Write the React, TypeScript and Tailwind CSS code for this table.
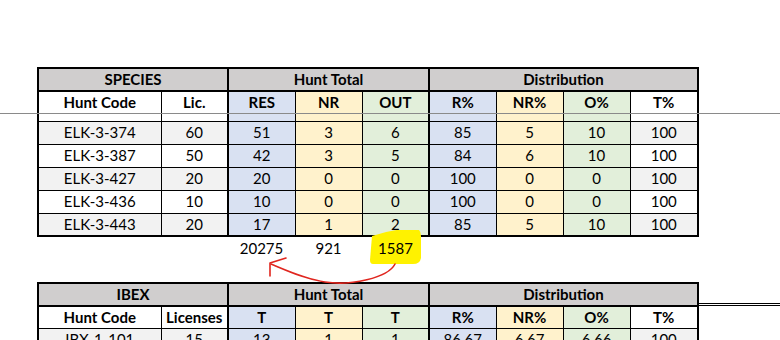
import React from "react";

const FONT = { fontFamily: "Lato, 'Open Sans', sans-serif" };

const widths = [123, 67, 67, 67, 67, 67, 67, 67, 68];
const colBg = ["", "", "bg-[#d9e1f2]", "bg-[#fff2cc]", "bg-[#e2efda]", "bg-[#d9e1f2]", "bg-[#fff2cc]", "bg-[#e2efda]", ""];

function cellBorder(i: number) {
  return i === 1 || i === 4 ? "border border-black border-r-2" : "border border-black";
}

function Table({
  title,
  lic,
  heads,
  rows,
  strip,
}: {
  title: string;
  lic: string;
  heads: string[];
  rows: string[][];
  strip: boolean;
}) {
  const headers = ["Hunt Code", lic, ...heads, "R%", "NR%", "O%", "T%"];
  return (
    <table className="w-[660px] border-collapse border-2 border-black table-fixed text-[15px] text-black leading-none">
      <colgroup>
        {widths.map((w, i) => (
          <col key={i} style={{ width: w }} />
        ))}
      </colgroup>
      <tbody>
        <tr className="h-[23px]">
          <td colSpan={2} className="border-2 border-black bg-[#d0cece] text-center font-bold p-0">
            {title}
          </td>
          <td colSpan={3} className="border-2 border-black bg-[#d0cece] text-center font-bold p-0">
            Hunt Total
          </td>
          <td colSpan={4} className="border-2 border-black bg-[#d0cece] text-center font-bold p-0">
            Distribution
          </td>
        </tr>
        <tr className="h-[22px]">
          {headers.map((h, i) => (
            <td
              key={i}
              className={`${cellBorder(i)} ${strip ? "border-b-[#8a8a8a]" : ""} ${colBg[i] || "bg-white"} text-center font-bold p-0`}
            >
              {h}
            </td>
          ))}
        </tr>
        {strip && (
          <tr className="h-[8px]">
            {headers.map((_, i) => (
              <td key={i} className={`${cellBorder(i)} ${colBg[i] || "bg-white"} p-0`} />
            ))}
          </tr>
        )}
        {rows.map((r, ri) => (
          <tr key={ri} className="h-[23px]">
            {r.map((v, i) => {
              const alt = ri % 2 === 0 ? "bg-[#f2f2f2]" : "bg-white";
              return (
                <td key={i} className={`${cellBorder(i)} ${colBg[i] || alt} text-center p-0`}>
                  {v}
                </td>
              );
            })}
          </tr>
        ))}
      </tbody>
    </table>
  );
}

export default function App() {
  const elk = [
    ["ELK-3-374", "60", "51", "3", "6", "85", "5", "10", "100"],
    ["ELK-3-387", "50", "42", "3", "5", "84", "6", "10", "100"],
    ["ELK-3-427", "20", "20", "0", "0", "100", "0", "0", "100"],
    ["ELK-3-436", "10", "10", "0", "0", "100", "0", "0", "100"],
    ["ELK-3-443", "20", "17", "1", "2", "85", "5", "10", "100"],
  ];
  const ibx = [["IBX-1-101", "15", "13", "1", "1", "86.67", "6.67", "6.66", "100"]];
  return (
    <div className="relative w-[780px] h-[340px] overflow-hidden bg-white" style={FONT}>
      <div className="absolute left-0 top-[113px] w-full h-px bg-[#8a8a8a]" />
      <div className="absolute left-[697px] top-[303px] w-[83px] h-px bg-black" />
      <div className="absolute left-[697px] top-[305px] w-[83px] h-px bg-black" />
      <div className="pt-[67px] pl-[37px] flex flex-col">
        <Table title="SPECIES" lic="Lic." heads={["RES", "NR", "OUT"]} rows={elk} strip />
        <div className="relative flex h-[22px] items-center text-[15px] text-black">
          <svg className="absolute left-[-37px] top-[-7px]" width="780" height="60" viewBox="0 230 780 60">
            <path
              d="M372 236 Q 395 228 417 229 Q 421 230 421 236 L 421 258 Q 420 264 413 264 L 373 264 Q 370 264 370 260 Z"
              fill="#fff200"
            />
          </svg>
          <div className="w-[191px]" />
          <div className="relative w-[67px] text-center">20275</div>
          <div className="relative w-[67px] text-center">921</div>
          <div className="relative w-[67px] text-center">1587</div>
        </div>
        <div className="h-[23px]" />
        <Table title="IBEX" lic="Licenses" heads={["T", "T", "T"]} rows={ibx} strip={false} />
      </div>
      <svg className="absolute left-0 top-0 pointer-events-none" width="780" height="340">
        <path
          d="M395 264 C 388 278, 350 286, 325 282 C 305 279, 288 271, 271 264"
          fill="none"
          stroke="#e0261f"
          strokeWidth="1.6"
          strokeLinecap="round"
        />
        <path d="M286 258 L 270 263 L 270 276" fill="none" stroke="#e0261f" strokeWidth="1.6" strokeLinecap="round" strokeLinejoin="round" />
      </svg>
    </div>
  );
}
